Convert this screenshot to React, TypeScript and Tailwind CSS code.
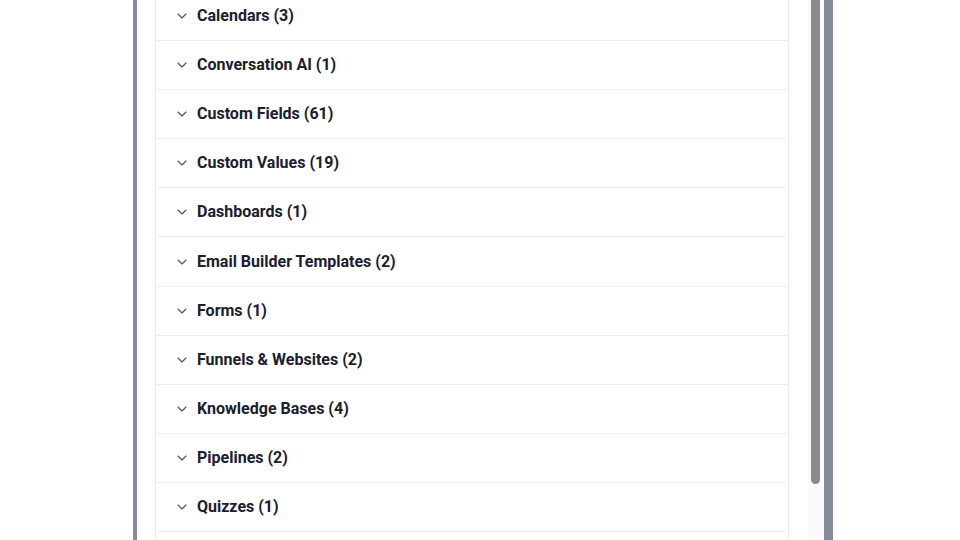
import { ChevronDown } from 'lucide-react'

const groups = [
  { name: 'Calendars', count: 3 },
  { name: 'Conversation AI', count: 1 },
  { name: 'Custom Fields', count: 61 },
  { name: 'Custom Values', count: 19 },
  { name: 'Dashboards', count: 1 },
  { name: 'Email Builder Templates', count: 2 },
  { name: 'Forms', count: 1 },
  { name: 'Funnels & Websites', count: 2 },
  { name: 'Knowledge Bases', count: 4 },
  { name: 'Pipelines', count: 2 },
  { name: 'Quizzes', count: 1 },
]

export default function App() {
  return (
    <div className="h-[540px] w-[960px] overflow-hidden bg-white font-['Roboto',sans-serif]">
      <div className="ml-[133px] flex h-full w-[700px] border-l-4 border-r-[9px] border-[#858d9b] bg-white">
        {/* list */}
        <div className="relative h-full flex-1 overflow-hidden pl-[18px] pr-[35px]">
          <div className="-mt-[8px] border-x border-[#e9eaee]">
            {groups.map((g) => (
              <div
                key={g.name}
                className="flex h-[49.1px] items-center gap-[7px] border-b border-[#eceef1] pl-[18px]"
              >
                <ChevronDown className="h-[16px] w-[16px] text-[#4b5563]" strokeWidth={1.75} />
                <span className="text-[16px] font-bold text-[#19202e]">
                  {g.name} ({g.count})
                </span>
              </div>
            ))}
            <div className="h-[40px]" />
          </div>

          {/* scrollbar overlay */}
          <div className="absolute right-0 top-0 h-full w-[16px] bg-[#fafafa]">
            <div className="ml-[3px] h-[484px] w-[9px] rounded-b-[5px] bg-[#8a8a8a]" />
          </div>
        </div>
      </div>
    </div>
  )
}
